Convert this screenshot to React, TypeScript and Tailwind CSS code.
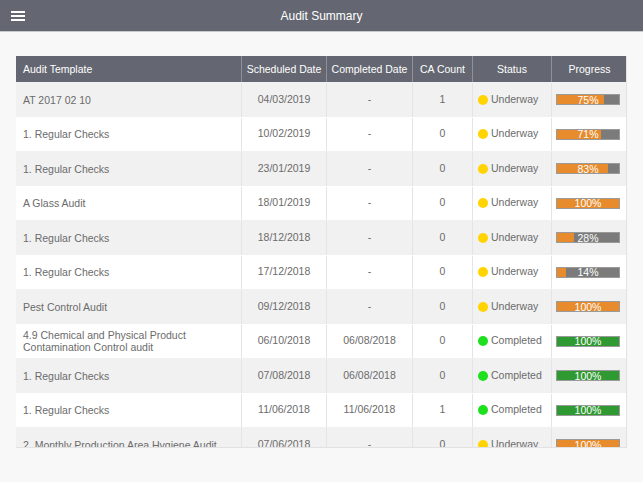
const rows = [
  { name: "AT 2017 02 10", sched: "04/03/2019", done: "-", ca: 1, status: "Underway", pct: 75 },
  { name: "1. Regular Checks", sched: "10/02/2019", done: "-", ca: 0, status: "Underway", pct: 71 },
  { name: "1. Regular Checks", sched: "23/01/2019", done: "-", ca: 0, status: "Underway", pct: 83 },
  { name: "A Glass Audit", sched: "18/01/2019", done: "-", ca: 0, status: "Underway", pct: 100 },
  { name: "1. Regular Checks", sched: "18/12/2018", done: "-", ca: 0, status: "Underway", pct: 28 },
  { name: "1. Regular Checks", sched: "17/12/2018", done: "-", ca: 0, status: "Underway", pct: 14 },
  { name: "Pest Control Audit", sched: "09/12/2018", done: "-", ca: 0, status: "Underway", pct: 100 },
  {
    name: "4.9 Chemical and Physical Product Contamination Control audit",
    sched: "06/10/2018",
    done: "06/08/2018",
    ca: 0,
    status: "Completed",
    pct: 100,
  },
  { name: "1. Regular Checks", sched: "07/08/2018", done: "06/08/2018", ca: 0, status: "Completed", pct: 100 },
  { name: "1. Regular Checks", sched: "11/06/2018", done: "11/06/2018", ca: 1, status: "Completed", pct: 100 },
  { name: "2. Monthly Production Area Hygiene Audit", sched: "07/06/2018", done: "-", ca: 0, status: "Underway", pct: 100 },
];

const cols = "grid grid-cols-[225px_85px_86px_60px_79px_76px]";

const ProgressBar = ({ pct, done }: { pct: number; done: boolean }) => (
  <div className="relative w-[64px] h-[11px] bg-[#7b7b7b] border border-[#9a9a9a]">
    <div
      className={done ? "h-full bg-[#2f9a31]" : "h-full bg-[#e88b2c]"}
      style={{ width: `${pct}%` }}
    />
    <span className="absolute inset-0 flex items-center justify-center text-[10.5px] leading-none text-white">
      {pct}%
    </span>
  </div>
);

export default function App() {
  return (
    <div
      className="w-[643px] h-[482px] bg-[#f8f8f8] overflow-hidden"
      style={{ fontFamily: '"Liberation Sans", Arial, sans-serif' }}
    >
      <div className="relative h-[32px] bg-[#646771] border-b border-[#c9cacd] flex items-center justify-center">
        <div className="absolute left-[11px] top-[11px] flex flex-col gap-[2px]">
          <span className="block w-[14px] h-[2px] bg-white" />
          <span className="block w-[14px] h-[2px] bg-white" />
          <span className="block w-[14px] h-[2px] bg-white" />
        </div>
        <span className="text-white text-[12px]">Audit Summary</span>
      </div>

      <div className="ml-[16px] mt-[24px] w-[611px] h-[392px] overflow-hidden border-r border-b border-[#e2e2e2] text-[10.5px] text-[#6b6b6b]">
        <div className={`${cols} h-[26px] bg-[#646771] text-white`}>
          <div className="flex items-center px-[7px] pt-[1px]">Audit Template</div>
          <div className="flex items-center justify-center pt-[1px] border-l border-[#8f9199]">Scheduled Date</div>
          <div className="flex items-center justify-center pt-[1px] border-l border-[#8f9199]">Completed Date</div>
          <div className="flex items-center justify-center pt-[1px] border-l border-[#8f9199]">CA Count</div>
          <div className="flex items-center justify-center pt-[1px] border-l border-[#8f9199]">Status</div>
          <div className="flex items-center justify-center pt-[1px] border-l border-[#8f9199]">Progress</div>
        </div>
        {rows.map((r, i) => {
          const done = r.status === "Completed";
          return (
            <div
              key={i}
              className={`${cols} h-[34.5px] pt-[1px] ${i % 2 === 0 ? "bg-[#f1f1f1]" : "bg-white"}`}
            >
              <div className="flex items-center px-[7px] leading-[12px]">{r.name}</div>
              <div className="flex items-center justify-center border-l border-[#e4e4e4]">{r.sched}</div>
              <div className="flex items-center justify-center border-l border-[#e4e4e4]">{r.done}</div>
              <div className="flex items-center justify-center border-l border-[#e4e4e4]">{r.ca}</div>
              <div className="flex items-center gap-[3px] pl-[5px] border-l border-[#e4e4e4]">
                <span
                  className={`block w-[10px] h-[10px] rounded-full ${done ? "bg-[#1ee01e]" : "bg-[#ffd400]"}`}
                />
                {r.status}
              </div>
              <div className="flex items-center pl-[4px] border-l border-[#e4e4e4]">
                <ProgressBar pct={r.pct} done={done} />
              </div>
            </div>
          );
        })}
      </div>
    </div>
  );
}
